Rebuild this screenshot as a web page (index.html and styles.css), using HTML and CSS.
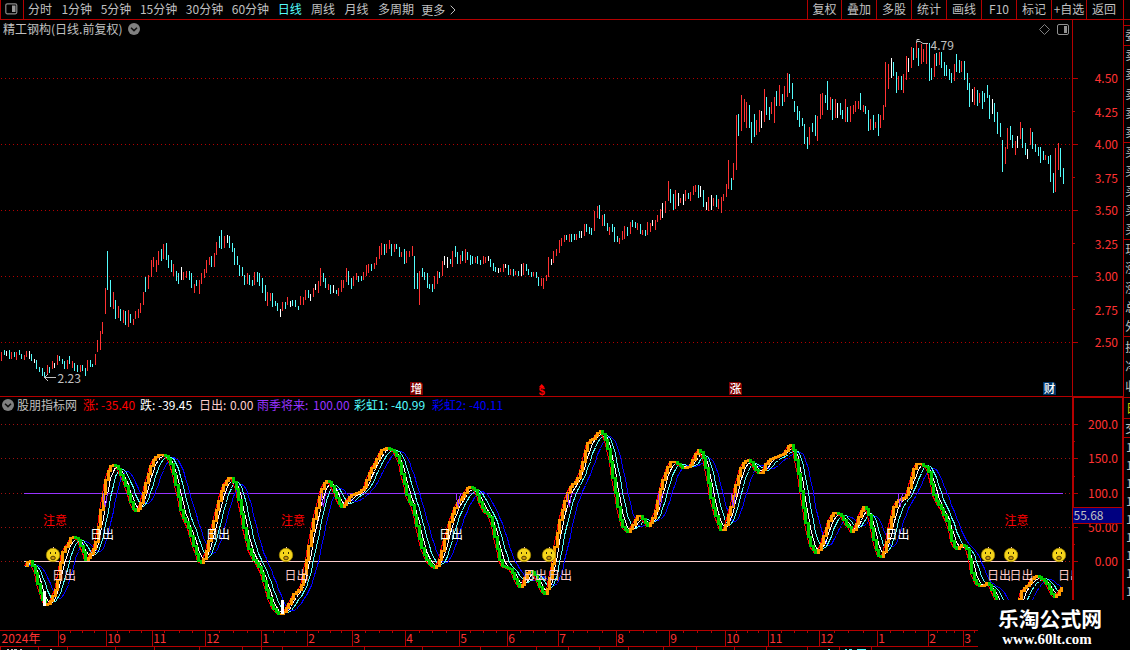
FILE: index.html
```html
<!DOCTYPE html>
<html lang="zh-CN">
<head>
<meta charset="utf-8">
<title>精工钢构</title>
<link rel="stylesheet" href="styles.css">
</head>
<body>
<div class="app">
  <header class="toolbar">
    <div class="layout-toggle"><svg width="13" height="12" viewBox="0 0 13 12"><rect x=".8" y=".8" width="11" height="10" rx="1.5" fill="none" stroke="#8a8a8a" stroke-width="1.2"/><rect x="7" y="2.5" width="3.5" height="6.500" fill="#999"/></svg></div>
    <nav class="periods">
      <a>分时</a><a class="min">1分钟</a><a class="min">5分钟</a><a class="min">15分钟</a><a class="min">30分钟</a><a class="min">60分钟</a><a class="active">日线</a><a>周线</a><a>月线</a><a>多周期</a><a class="more">更多<svg width="6" height="10" viewBox="0 0 6 10"><path d="M.7.7 5 5 .7 9.300" fill="none" stroke="#c0c0c0"/></svg></a>
    </nav>
    <nav class="tools"><a>复权</a><a>叠加</a><a>多股</a><a>统计</a><a>画线</a><a>F10</a><a>标记</a><a>+自选</a><a class="last">返回</a></nav>
  </header>
  <div class="body">
    <main class="main">
      <section class="pane price">
        <svg id="price" class="chart" width="1123" height="376" viewBox="0 20 1123 376"></svg>
        <div class="title"><span>精工钢构(日线.前复权)</span><svg class="round" width="12" height="12" viewBox="0 0 12 12"><circle cx="6" cy="6" r="6" fill="#808080"/><path d="M3 4.700 6 7.600 9 4.700" fill="none" stroke="#111" stroke-width="1.500"/></svg></div>
      </section>
      <section class="pane indicator">
        <svg id="indicator" class="chart" width="1123" height="234" viewBox="0 396 1123 234"></svg>
        <div class="legend">
          <svg class="round" width="12" height="12" viewBox="0 0 12 12"><circle cx="6" cy="6" r="6" fill="#808080"/><path d="M3 4.700 6 7.600 9 4.700" fill="none" stroke="#111" stroke-width="1.500"/></svg>
          <span class="name">股朋指标网</span>
          <span class="up"><i>涨:</i>-35.40</span><span class="down"><i>跌:</i>-39.45</span><span class="sun"><i>日出:</i>0.00</span><span class="rain"><i>雨季将来:</i>100.00</span><span class="bow1"><i>彩虹1:</i>-40.99</span><span class="bow2"><i>彩虹2:</i>-40.11</span>
        </div>
      </section>
      <svg id="time" class="time" width="1123" height="20" viewBox="0 630 1123 20"></svg>
    </main>
    <aside class="quote" id="quote"></aside>
  </div>
  <div class="brand"><strong>乐淘公式网</strong><b>www.60lt.com</b></div>
</div>
<script src="chart.js"></script>
</body>
</html>
```
FILE: styles.css
```css
* { box-sizing: border-box; }
body { margin: 0; background: #000; overflow: hidden; }
.app {
  position: relative; width: 1130px; height: 650px; overflow: hidden;
  background: #000; color: #c0c0c0;
  font: 12px/18px "Noto Sans CJK SC", "Liberation Sans", sans-serif;
}
svg { display: block; }
.toolbar { display: flex; height: 20px; border-bottom: 1px solid #b40000; }
.layout-toggle { width: 24px; padding: 3px 0 0 5px; border-left: 1px solid #b40000; border-right: 1px solid #b40000; }
.layout-toggle svg { margin-left: -1px; }
.periods { display: flex; gap: 9.4px; padding-left: 4px; flex: 1; white-space: nowrap; }
.periods .min { margin-right: -.8px; }
.periods .active { color: #54fcfc; }
.periods .more { display: flex; align-items: center; gap: 5px; margin-left: -2px; }
.tools { display: flex; width: 323px; }
.tools a { width: 35px; text-align: center; border-left: 1px solid #b40000; white-space: nowrap; }
.tools a:first-child { width: 34px; }
.tools .last { width: 38px; padding-right: 2px; border-right: 1px solid #b40000; }
.body { display: flex; height: 630px; }
.main { width: 1123px; }
.pane { position: relative; }
.price { height: 376px; }
.indicator { height: 234px; }
.title { position: absolute; left: 3px; top: 0; display: flex; gap: 6px; align-items: center; }
.legend { position: absolute; left: 2px; top: 0; display: flex; align-items: center; white-space: nowrap; }
.legend i { font-style: normal; display: inline-block; }
.name { width: 66px; margin-left: 3px; }
.up { width: 57px; color: #f00; }
.up i, .down i { width: 18px; }
.down { width: 59px; color: #fff; }
.sun { width: 58px; color: #fcc; }
.sun i { width: 31px; }
.rain { width: 97px; color: #93f; }
.rain i { width: 56px; }
.bow1 { width: 78px; color: #54fcfc; }
.bow1 i, .bow2 i { width: 37px; }
.bow2 { color: #00f; }
.quote { width: 7px; overflow: hidden; }
.chart text, .time text { font: 12px "Noto Sans CJK SC", "Liberation Sans", sans-serif; }
.chart .scale, .time text { fill: #ff3232; }
.chart .note { fill: #c0c0c0; }
.chart .flag { fill: #fff; font-weight: 500; font-size: 11.5px; }
.chart .dividend { fill: #f00; font: 700 11px "Liberation Sans", sans-serif; }
.brand {
  position: absolute; left: 978px; top: 600px; width: 152px; height: 50px;
  background: #000; color: #fff; display: flex; flex-direction: column; align-items: center; padding-right: 8px;
}
.brand strong { font-size: 20.8px; font-weight: 700; line-height: 30px; margin-top: 3px; width: 104px; white-space: nowrap; }
.brand b { font: 700 14.9px/14px "Liberation Serif", serif; margin-top: -1px; margin-right: 6px; }
```
FILE: chart.js
```js
const NS = 'http://www.w3.org/2000/svg';
const RED = '#b40000';
const tones = { R: '#ff3232', C: '#54fcfc', W: '#ffffff' };

function add(svg, tag, attrs, text) {
  const el = document.createElementNS(NS, tag);
  for (const k in attrs) el.setAttribute(k, attrs[k]);
  if (text !== undefined) el.textContent = text;
  svg.appendChild(el);
  return el;
}
const box = (s, x, y, w, h, fill) => add(s, 'rect', { x, y, width: w, height: h, fill, 'shape-rendering': 'crispEdges' });
const label = (s, x, cy, t, attrs) => add(s, 'text', Object.assign({ x, y: cy + 4.5 }, attrs), t);
function dots(s, y, color) {
  add(s, 'line', { x1: 1, x2: 1071, y1: y + .5, y2: y + .5, stroke: color, 'stroke-dasharray': '1 3', 'shape-rendering': 'crispEdges' });
}

/* High-low bars: x, top, bottom in thirds of a pixel from each block's origin */
const blocks = [
  [0, 200, `4 456 483 R,13 450 465 C,19 453 468 W,28 450 477 C,34 456 477 R,43 456 471 C,49 456 480 R,58 450 465 C,64 462 477 C,73 465 480 R,79 453 471 R,88 453 477 W,94 462 483 C,103 477 489 W,109 480 507 C,118 501 516 C,127 504 528 C,133 516 535 C,142 495 525 R,148 501 519 C,157 483 507 R,163 489 504 W,172 465 495 R,178 468 483 C,187 477 492 C,193 483 507 C,202 480 507 R,208 468 492 C,217 483 504 R,223 489 513 C,232 495 516 C,241 495 516 R,247 495 513 C,256 504 528 C,262 480 513 R,271 480 501 C,277 492 501 C,286 462 495 R,292 420 456 R,301 393 450 R,307 366 402 R,316 264 342 R,322 153 270 C,331 240 321 C,340 276 327 R,346 300 357 C,355 318 354 R,361 327 363 C,370 330 369 R,376 333 375 C,385 330 381 R,391 342 369 C,400 357 375 R,406 333 357 R,415 327 354 R,421 309 339 R,430 276 315 R,436 231 276 C,445 225 267 R,454 180 231 R,460 171 201 R,469 180 216 R,475 153 195 R,484 147 183 C,490 132 177 R,499 129 180 C,505 165 204 C,514 180 216 C,520 192 228 R,529 213 243 C,535 219 252 C,544 201 240 W,550 216 240 R,559 213 234 R,568 213 240 C,574 219 264 C,583 252 279 R,589 240 258 C,598 240 282 R,604 219 252 R,613 207 234 R,619 180 219 R,628 171 195 R,634 168 201 C,643 159 201 R,649 126 165 R,658 108 144 C,664 90 147 C,673 108 144 R,682 105 129 W,688 108 144 C,697 129 156 C,703 144 195 C,712 168 195 C,718 195 228 C,727 201 228 C,733 225 255 C,742 219 252 R,748 225 255 C,757 240 258 C,763 216 255 R,772 216 246 C,778 219 258 C,787 234 279 C,796 255 303 C,802 276 318 R,811 279 303 R,817 279 321 C,826 303 318 C,832 309 333 C,841 327 351 W,847 306 333 R,856 306 327 C,862 291 315 R,871 303 321 W,877 300 318 C,886 300 321 C,895 318 330 C,901 288 315 R,910 291 315 R,916 270 300 R,925 270 294 C,931 282 303 W,940 264 291 R,946 252 270 W,955 243 279 R,961 204 258 R,970 219 246 C,976 234 264 C,985 252 270 R,991 255 282 C,1000 255 279 W,1009 270 282 C,1015 264 288 R,1024 240 276 R,1030 240 264 R,1039 204 246 R,1045 213 255 C,1054 234 267 C,1060 228 258 R,1069 219 240 R,1075 228 246 C,1084 228 243 C,1090 216 240 R,1099 195 228 R,1105 192 219 R,1114 192 213 C,1123 189 207 R,1129 171 195 R,1138 138 177 R`],
  [380, 190, `4 159 195 R,13 162 195 C,19 162 189 R,28 150 177 R,34 162 198 C,43 162 186 R,49 162 177 C,58 171 201 C,64 186 201 R,73 177 222 C,79 183 219 R,88 183 201 R,97 168 198 R,103 198 297 C,112 249 297 C,118 243 345 R,127 234 261 C,133 246 270 C,142 249 294 C,148 282 297 C,157 282 306 C,163 258 297 R,172 243 282 R,178 246 264 C,187 213 258 R,193 198 225 W,202 201 234 W,211 207 222 C,217 183 231 R,226 168 201 C,232 186 222 C,241 195 222 R,247 183 213 C,256 177 219 R,262 186 210 C,271 195 225 C,277 198 222 C,286 201 219 R,292 198 222 C,301 210 225 C,310 198 222 R,316 201 219 R,325 198 213 W,331 207 231 C,340 219 243 C,346 231 246 C,355 234 249 W,361 234 246 R,370 222 246 R,376 222 234 W,385 225 255 C,391 237 255 R,400 237 258 C,406 243 255 R,415 243 258 C,424 222 258 W,430 219 255 R,439 222 243 C,445 237 255 C,454 246 261 C,460 246 258 R,469 246 264 C,475 261 288 C,484 264 288 R,490 264 297 R,499 255 273 R,505 201 261 R,514 207 225 W,520 183 219 R,529 177 198 R,538 150 189 R,544 144 168 R,553 135 156 R,559 135 150 C,568 132 156 R,574 132 156 C,583 132 150 C,589 132 150 R,598 123 144 C,604 123 144 W,613 102 138 R,619 102 126 C,628 111 132 C,634 114 135 C,643 63 123 R,652 48 84 R,658 45 87 C,667 75 108 R,673 72 108 C,682 99 123 C,688 111 135 R,697 102 126 C,703 111 156 C,712 138 156 C,718 144 162 R,727 123 150 R,733 108 147 R,742 111 138 C,751 96 132 R,757 90 111 C,766 96 114 C,772 99 120 R,781 102 132 C,787 120 135 R,796 120 138 C,802 96 135 R,811 99 126 R,817 90 108 W,826 90 120 R,832 75 96 R,841 57 90 R,847 39 84 W,856 33 69 R,865 -27 33 R,871 -3 39 C,880 12 60 C,886 0 57 R,895 9 48 W,901 24 39 R,910 12 45 W,916 0 33 R,925 9 27 C,931 6 33 R,940 -12 15 R,946 -15 6 R,955 -15 24 C`],
  [700, 30, `1 468 501 W,10 480 531 C,19 516 540 W,25 501 543 R,34 495 540 W,40 504 528 R,49 495 531 C,55 507 537 R,64 501 549 R,70 492 513 R,79 462 501 R,85 390 477 R,94 444 480 C,100 399 450 R,109 255 420 R,115 252 318 C,124 195 303 R,133 207 276 R,139 216 294 R,148 225 294 C,154 276 339 C,163 252 321 C,169 270 315 R,178 240 306 R,184 243 294 W,193 177 276 R,199 201 255 C,208 231 270 C,214 216 252 R,223 201 279 R,229 183 228 C,238 165 228 R,247 192 228 C,253 168 216 R,262 129 201 R,268 132 189 C,277 159 207 C,283 213 246 C,292 228 270 C,298 243 291 C,307 264 288 C,313 282 342 C,322 321 357 C,328 291 345 R,337 279 306 C,346 255 318 C,352 258 333 R,361 192 267 R,367 189 255 R,376 195 219 C,382 153 240 C,391 201 240 R,397 207 270 C,406 207 264 R,412 219 264 W,421 219 255 C,427 240 267 C,436 207 276 R,442 231 276 C,451 228 276 R,460 225 252 R,466 213 246 R,475 213 237 R,481 189 240 C,490 225 246 R,496 228 252 C,505 240 303 C,511 267 300 R,520 255 300 C,526 276 294 R,535 252 318 C,541 255 294 R,550 225 270 R,556 96 231 R,565 102 177 R,574 84 144 W,580 96 138 C,589 126 189 C,595 138 180 R,604 138 180 C,610 132 189 R,619 78 150 R,625 84 126 W,634 51 114 R,640 54 90 C,649 39 84 R,655 54 108 C,664 42 102 R,670 57 96 R,679 39 102 R,688 39 153 C,694 114 150 C,703 72 141 R,709 69 108 C,718 66 105 R,724 66 114 C,733 96 138 C,739 105 138 C,748 117 150 C,754 129 159 C,763 102 153 R,769 72 126 C,778 90 129 C,784 93 126 R,793 93 150 C,802 129 180 C,808 159 231 C,817 177 216 W,823 171 225 R,832 180 228 C,838 189 219 R,847 183 237 C,853 189 216 C,862 165 204 C,868 195 267 C,877 207 252 W,883 219 276 C,892 246 312 C,901 279 321 C,907 330 426 C,916 351 402 R,922 294 357 R,931 288 330 C,937 315 354 C,946 333 375 R,952 318 354 W,961 276 327 R,967 294 354 C,976 339 375 C,982 357 387 W,991 294 345 R,997 306 357 C,1006 342 366 C,1015 351 378 C,1021 351 399 C,1030 363 390 C,1036 375 390 R,1045 378 402 C,1051 375 456 C,1060 429 489 C,1066 354 486 R,1075 339 420 R,1081 354 441 C,1090 414 462 C`]
];

/* Price pane */
const p = document.getElementById('price');
[78, 144, 210, 276, 342].forEach(y => { dots(p, y, RED); box(p, 1073, y, 5, 1, RED); });
[111, 177, 243, 309].forEach(y => box(p, 1073, y, 2, 1, RED));
box(p, 1072, 20, 1, 376, RED);
[[78.5, '4.50'], [112.5, '4.25'], [144.5, '4.00'], [178.5, '3.75'], [210.5, '3.50'], [244.5, '3.25'], [276.5, '3.00'], [310.5, '2.75'], [342.5, '2.50']]
  .forEach(([y, t]) => label(p, 1118, y, t, { 'text-anchor': 'end', class: 'scale' }));
for (const [ox, oy, rows] of blocks) {
  for (const row of rows.split(',')) {
    const [x, a, b, c] = row.trim().split(' ');
    box(p, Math.floor(ox + x / 3), Math.round(oy + a / 3), 1, Math.round((b - a) / 3), tones[c]);
  }
}
label(p, 930.5, 45.5, '4.79', { class: 'note' });
add(p, 'path', { d: 'M919.500 39.500H917L916.500 43M917 41.500H920L923 43.500H928', fill: 'none', stroke: '#c0c0c0' });
label(p, 57.5, 378.7, '2.23', { class: 'note' });
add(p, 'path', { d: 'M56 377.500H44.500M48 374 44.500 377.500 48 381', fill: 'none', stroke: '#c0c0c0' });
[[410, '增', '#800000'], [729, '涨', '#800000'], [1043, '财', '#003366']].forEach(([x, t, c]) => {
  add(p, 'path', { d: `M${x} 382h11l2 2v11h-13z`, fill: c });
  label(p, x + .7, 388.6, t, { class: 'flag' });
});
add(p, 'text', { x: 538.7, y: 395, class: 'dividend' }, '$');
add(p, 'path', { d: 'M538.800 387.300 541.700 384 544.700 387.300Z', fill: '#f00' });
add(p, 'path', { d: 'M1044.500 24.500 1049.500 29.500 1044.500 34.500 1039.500 29.500Z', fill: 'none', stroke: '#808080' });
add(p, 'rect', { x: 1057.5, y: 24.5, width: 11, height: 10, rx: 1.5, fill: 'none', stroke: '#909090' });
box(p, 1064, 26, 3, 7, '#909090');

/* Indicator pane */
const q = document.getElementById('indicator');
[424, 458, 493, 527, 561].forEach(y => { dots(q, y, '#a01010'); box(q, 1073, y, 5, 1, RED); });
[441, 476, 510, 544].forEach(y => box(q, 1073, y, 2, 1, RED));
box(q, 24, 493, 1039, 1, '#9933ff');
box(q, 24, 561, 1039, 1, '#ffcccc');

/* Oscillator outline, thirds of a pixel from y = 395 */
const curve = `76 512,82 504,90 496,97 508,104 525,112 560,120 590,128 612,134 630,143 628,150 620,157 608,165 590,173 560,180 510,187 475,195 458,203 445,211 428,218 424,226 428,234 436,241 452,249 470,257 495,264 488,272 478,280 460,287 440,294 400,301 350,309 300,316 260,324 230,332 212,339 210,347 213,354 222,362 240,370 256,378 275,386 300,393 325,400 342,408 347,416 342,424 320,432 285,440 255,447 230,455 205,463 190,471 182,485 180,495 181,503 188,511 202,520 235,528 270,536 310,543 345,551 370,560 385,568 405,576 435,584 465,592 490,600 507,607 500,615 480,623 450,631 415,640 380,647 350,655 322,662 290,670 272,678 258,688 247,695 250,702 262,710 285,718 325,727 375,735 420,743 455,752 478,762 495,772 508,780 522,788 545,795 570,803 600,812 625,820 642,830 652,840 659,848 655,855 648,862 635,870 620,878 602,886 592,894 590,902 578,908 560,916 515,924 470,932 420,940 380,948 345,956 310,963 285,971 265,978 258,987 262,995 272,1003 292,1011 312,1018 330,1026 337,1034 328,1043 312,1051 303,1065 297,1080 291,1090 282,1098 262,1106 238,1115 220,1124 205,1132 190,1140 172,1148 163,1158 159,1170 161,1180 168,1188 178,1196 195,1204 230,1212 262,1220 300,1228 320,1236 330,1244 362,1252 400,1260 440,1268 468,1276 487,1285 502,1295 513,1303 519,1311 512,1319 495,1327 465,1335 425,1343 400,1351 372,1359 350,1367 332,1375 318,1383 310,1392 297,1400 280,1408 276,1417 278,1425 287,1433 305,1441 325,1449 345,1457 355,1465 356,1472 375,1480 405,1488 445,1496 485,1504 510,1512 516,1520 517,1530 523,1540 540,1548 560,1556 573,1564 577,1571 560,1578 540,1586 527,1595 528,1603 537,1611 555,1619 575,1627 592,1634 598,1641 585,1648 560,1656 515,1664 460,1671 420,1679 380,1687 345,1695 318,1703 292,1705 285,1715 270,1725 260,1735 245,1743 220,1751 185,1759 150,1768 135,1777 132,1785 122,1795 110,1803 108,1812 122,1820 150,1828 185,1836 235,1844 285,1852 330,1859 370,1867 395,1875 405,1884 410,1892 402,1900 388,1908 372,1915 362,1923 365,1931 375,1940 392,1946 392,1954 380,1962 360,1970 335,1978 295,1986 262,1994 240,2002 218,2010 202,2020 200,2030 203,2040 212,2050 220,2065 217,2073 208,2081 190,2089 170,2096 165,2104 175,2112 195,2120 235,2128 290,2136 330,2144 355,2152 380,2160 402,2166 410,2173 400,2180 380,2187 350,2195 325,2202 290,2210 258,2218 230,2226 210,2236 197,2245 196,2254 203,2262 215,2270 230,2280 236,2288 228,2296 210,2304 197,2320 188,2335 182,2350 176,2360 165,2368 148,2376 152,2384 175,2392 215,2400 270,2408 325,2416 375,2424 420,2432 450,2440 465,2450 475,2459 460,2467 435,2475 410,2483 385,2491 365,2500 354,2512 353,2522 360,2530 375,2538 390,2545 395,2553 410,2560 407,2567 390,2575 370,2582 350,2590 335,2598 340,2606 360,2614 400,2622 440,2630 470,2640 490,2647 483,2655 460,2662 425,2670 385,2678 345,2686 325,2695 315,2710 312,2718 302,2726 280,2734 250,2742 220,2750 207,2760 205,2772 212,2782 217,2788 235,2795 270,2803 305,2811 323,2820 335,2828 350,2836 370,2844 390,2852 430,2860 455,2868 463,2878 454,2888 449,2898 455,2906 485,2914 530,2922 555,2930 567,2940 575,2950 572,2962 563,2970 575,2978 590,2986 612,3010 655,3035 675,3050 645,3060 605,3068 580,3080 575,3090 560,3100 548,3110 544,3125 550,3135 558,3145 575,3155 595,3165 607,3175 593,3182 583,3190 577`
  .split(',').map(v => v.split(' ').map(Number));
const xs = [], ys = [];
for (let x = 76, k = 0; x <= 3190; x += 7.53) {
  while (curve[k + 1][0] < x) k++;
  const [a, b] = [curve[k], curve[k + 1]];
  xs.push(x / 3);
  ys.push(395 + (a[1] + (b[1] - a[1]) * (x - a[0]) / (b[0] - a[0])) / 3);
}
const mean = (v, n) => v.map((_, i) => {
  const part = v.slice(Math.max(0, i - n + 1), i + 1);
  return part.reduce((s, z) => s + z, 0) / part.length;
});
const trace = (v, color, dx = 0) => add(q, 'polyline', {
  points: v.map((y, i) => (Math.floor(xs[i]) + .5 + dx) + ',' + (Math.round(y) + .5)).join(' '),
  fill: 'none', stroke: color, 'stroke-width': 1, 'shape-rendering': 'crispEdges'
});
const m1 = mean(ys, 4), m2 = mean(m1, 4), m3 = mean(m2, 5);
trace(m3, '#0000ff'); trace(m2, '#54fcfc'); trace(m1, '#ffffff');
trace(ys, '#ff0000', -1);
for (let i = 1; i < ys.length; i++) {
  const a = Math.round(ys[i - 1]), b = Math.round(ys[i]);
  box(q, Math.floor(xs[i]) - 1, Math.min(a, b) - 1, 3, Math.abs(b - a) + 2, b <= a ? '#ff9900' : '#00cc00');
}
box(q, 43, 591, 3, 15, '#fff');
box(q, 281, 600, 3, 14, '#fff');
[105, 323, 458, 569, 660, 733, 900].forEach(x =>
  add(q, 'path', { d: `M${x - 1.5} 493V498L${x + .5} 507 ${x + 2.500} 493`, fill: 'none', stroke: '#9933ff', 'shape-rendering': 'crispEdges' }));

[43, 281, 1004.5].forEach(x => label(q, x, 520.7, '注意', { fill: '#f00' }));
[90, 206, 439, 885.5].forEach(x => label(q, x, 534.3, '日出', { fill: '#fff' }));
const clip = add(q, 'clipPath', { id: 'plot' });
add(clip, 'rect', { x: 0, y: 396, width: 1072, height: 204 });
[52, 284.5, 523, 548, 987, 1009.5, 1058].forEach(x => label(q, x, 575.3, '日出', { fill: '#fcc', 'clip-path': 'url(#plot)' }));
[53, 286, 524, 549, 988, 1011, 1059].forEach(x => {
  box(q, x - .5, 547, 1, 2, '#fcc');
  add(q, 'circle', { cx: x, cy: 555, r: 6.7, fill: '#f5d51c', stroke: '#a88a00', 'stroke-width': .8 });
  box(q, x - 3, 552, 1, 2, '#332800'); box(q, x + 2, 552, 1, 2, '#332800');
  add(q, 'ellipse', { cx: x, cy: 558, rx: 2.3, ry: 1.8, fill: '#d09a10', stroke: '#443300', 'stroke-width': .9 });
});

box(q, 0, 396, 1123, 1, RED);
box(q, 1072, 397, 51, 1, RED);
box(q, 1072, 397, 2, 233, RED);
[[424.6, '200.0'], [458.6, '150.0'], [493.6, '100.0'], [527.6, '50.00'], [561.6, '0.00']]
  .forEach(([y, t]) => label(q, 1118, y, t, { 'text-anchor': 'end', class: 'scale' }));
box(q, 1073, 507, 49, 17, RED);
box(q, 1073, 508, 49, 15, '#000080');
label(q, 1073.500, 515, '55.68', { class: 'note', textLength: 30 });
box(q, 1122, 397, 1, 203, RED);

/* Time axis */
const t = document.getElementById('time');
box(t, 0, 630, 978, 1, RED);
box(t, 0, 646, 978, 1, RED);
label(t, 1.5, 638.7, '2024年', { textLength: 39 });
[[58, '9'], [106, '10'], [152, '11'], [205, '12'], [261, '1'], [307, '2'], [352, '3'], [405, '4'], [459, '5'], [507, '6'], [558, '7'], [616, '8'], [669, '9'], [725, '10'], [768, '11'], [819, '12'], [877, '1'], [928, '2'], [963, '3']]
  .forEach(([x, m]) => { box(t, x, 631, 1, 15, RED); label(t, x + 1.2, 638.7, m); });
[70, 82, 94, 117, 129, 141, 164, 179, 192, 219, 233, 247, 273, 284, 296, 318, 330, 341, 365, 379, 392, 419, 432, 446, 470, 483, 496, 520, 533, 545, 573, 587, 602, 629, 643, 656, 683, 697, 711, 736, 747, 758, 781, 794, 807, 834, 848, 863, 890, 903, 915, 937, 946, 954, 974]
  .forEach(x => box(t, x, 631, 1, 2, RED));
[0, 38, 67, 115, 154, 199, 242, 261, 282, 364, 422, 480, 536, 568, 599, 628, 663, 696, 734, 766, 807, 839, 871].forEach(x => box(t, x, 647, 1, 3, RED));
[[7, 2], [11, 2], [14, 3], [20, 2], [50, 2]].forEach(([x, w]) => box(t, x, 649, w, 1, '#c0c0c0'));
[[828, 2, 649], [845, 2, 649], [849, 3, 649], [857, 9, 649]].forEach(([x, w, y]) => box(t, x, y, w, 1, '#54fcfc'));

/* Quote column, cut off at the window's right edge */
const side = document.createElementNS(NS, 'svg');
side.setAttribute('width', 7); side.setAttribute('height', 630); side.setAttribute('viewBox', '1123 20 7 630');
side.setAttribute('class', 'chart');
document.getElementById('quote').appendChild(side);
box(side, 1123, 20, 1, 580, RED);
[25, 45, 142, 239, 336, 397, 418, 437].forEach(y => box(side, 1123, y, 7, 1, RED));
[[35, '委'], [55, '卖'], [74, '卖'], [94, '卖'], [113, '卖'], [132, '卖'], [152, '买'], [171, '买'], [191, '买'], [210, '买'], [229, '买'], [249, '现'], [268, '涨'], [288, '涨'], [307, '总'], [326, '外'], [347, '换'], [366, '净'], [386, '收'], [428, '交']]
  .forEach(([y, c]) => label(side, 1125.3, y, c, { class: 'note' }));
label(side, 1126, 408, '日', { fill: '#d0d000' });
[447, 465, 483, 501, 519, 537, 555, 573, 591].forEach(y => label(side, 1126, y, '1', { class: 'note' }));
```
